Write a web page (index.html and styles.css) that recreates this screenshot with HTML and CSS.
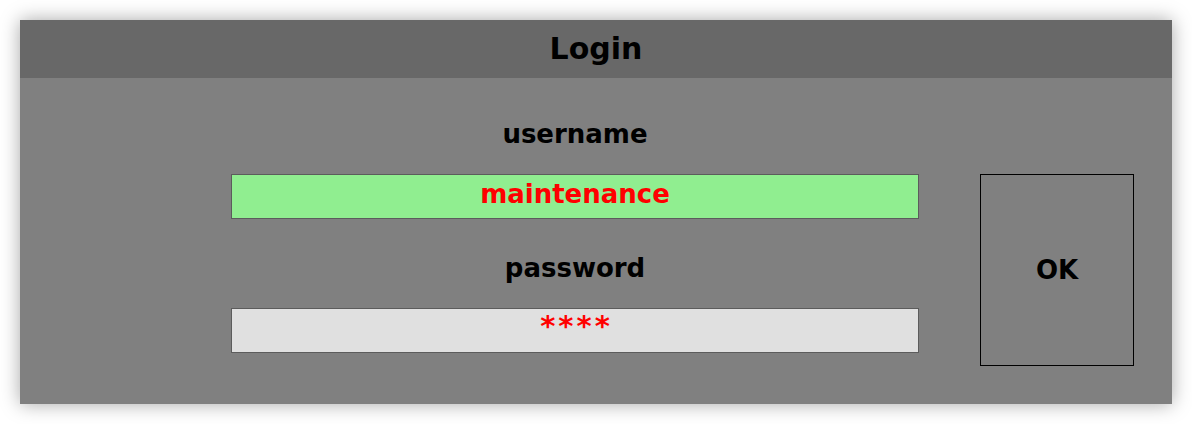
FILE: index.html
```html
<!DOCTYPE html>
<html>
<head>
<meta charset="utf-8">
<link rel="stylesheet" href="styles.css">
</head>
<body>
<div class="dialog">
  <div class="header">Login</div>
  <div class="content">
    <div class="form">
      <div class="label">username</div>
      <div class="field user">maintenance</div>
      <div class="label second">password</div>
      <div class="field pass">****</div>
    </div>
    <div class="side">
      <div class="ok">OK</div>
    </div>
  </div>
</div>
</body>
</html>
```
FILE: styles.css
```css
html, body {
  margin: 0;
  padding: 0;
  background: #ffffff;
}
body {
  padding: 20px;
  font-family: "DejaVu Sans", Verdana, sans-serif;
  font-weight: bold;
}
.dialog {
  width: 1152px;
  height: 384px;
  background: #808080;
  box-shadow: 0 0 18px rgba(0, 0, 0, 0.35);
  display: flex;
  flex-direction: column;
}
.header {
  height: 58px;
  background: #686868;
  color: #000;
  font-size: 30px;
  line-height: 58px;
  text-align: center;
}
.content {
  display: flex;
  padding: 38px 0 0 211px;
}
.form {
  width: 688px;
  display: flex;
  flex-direction: column;
}
.label {
  height: 36px;
  line-height: 36px;
  text-align: center;
  font-size: 26px;
  color: #000;
  margin-bottom: 22px;
}
.label.second {
  margin-top: 31px;
}
.field {
  box-sizing: border-box;
  height: 45px;
  border: 1px solid #5c5c5c;
  text-align: center;
  color: #ff0000;
  font-size: 26px;
  line-height: 38px;
}
.user {
  background: #90ee90;
}
.pass {
  background: #e0e0e0;
  font-size: 29px;
  line-height: 35px;
  letter-spacing: 3px;
  padding-left: 3px;
}
.side {
  padding: 58px 0 0 61px;
}
.ok {
  box-sizing: border-box;
  width: 154px;
  height: 192px;
  border: 1px solid #000;
  display: flex;
  align-items: center;
  justify-content: center;
  font-size: 26px;
  color: #000;
}
```
